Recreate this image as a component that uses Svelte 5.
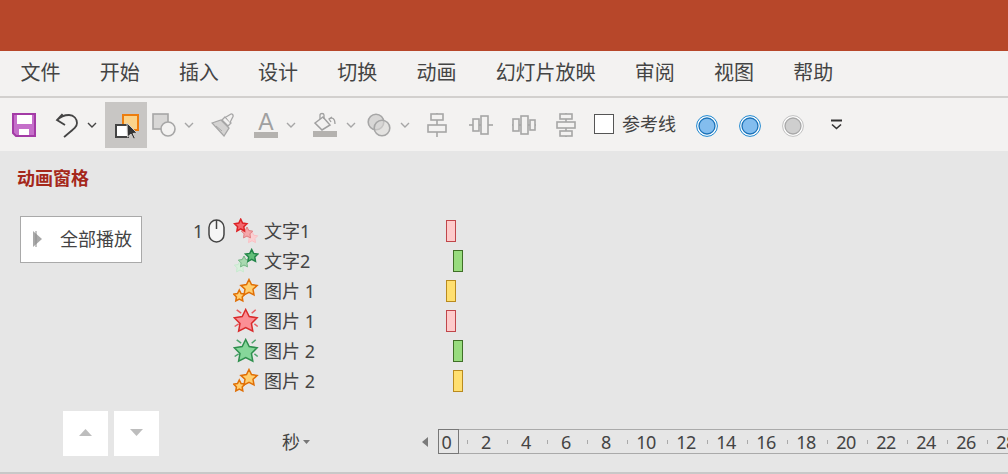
<script>
    const menus = ['文件', '开始', '插入', '设计', '切换', '动画', '幻灯片放映', '审阅', '视图', '帮助'];

    const rows = [
        { num: '1', icon: 'trailRed', label: '文字1', bar: 'red', offset: 0 },
        { icon: 'trailGreen', label: '文字2', bar: 'green', offset: 7 },
        { icon: 'twinOrange', label: '图片 1', bar: 'yellow', offset: 0 },
        { icon: 'burstRed', label: '图片 1', bar: 'red', offset: 0 },
        { icon: 'burstGreen', label: '图片 2', bar: 'green', offset: 7 },
        { icon: 'twinOrange', label: '图片 2', bar: 'yellow', offset: 7 }
    ];

    // ruler labels: one number every 2 seconds, a tick between
    const ticks = [];
    for (let n = 0; n <= 28; n += 2) ticks.push(n);

    function star(cx, cy, r) {
        const pts = [];
        for (let i = 0; i < 10; i++) {
            const rad = i % 2 ? r * 0.5 : r;
            const a = (Math.PI / 5) * i - Math.PI / 2;
            pts.push((cx + rad * Math.cos(a)).toFixed(1) + ',' + (cy + rad * Math.sin(a)).toFixed(1));
        }
        return pts.join(' ');
    }

    const rays = [[-9, -11.7, -4.5, -8.3], [10, -11.7, 6, -8.3], [-11, 5, -7, 2.3], [12, 5, 8.7, 2.3]];
</script>

{#snippet chevron(cls)}
    <svg class="chev {cls}" width="10" height="6" viewBox="0 0 10 6"><path d="M1 1l4 4 4-4" fill="none" stroke="currentColor" stroke-width="1.4" /></svg>
{/snippet}

{#snippet radio(cls, ring, fill, edge)}
    <svg class={cls} width="22" height="22" viewBox="0 0 22 22">
        <circle cx="11" cy="11" r="10.4" fill="#fff" stroke={ring} />
        <circle cx="11" cy="11" r="8" fill={fill} stroke={edge} stroke-width="1.3" />
    </svg>
{/snippet}

{#snippet rowIcon(kind)}
    <svg class="anim-icon" width="26" height="26" viewBox="0 0 26 26">
        {#if kind === 'trailRed'}
            <polygon points={star(19, 19.7, 6)} fill="#fbd0d2" stroke="#fbc0c4" />
            <polygon points={star(14, 15, 6)} fill="#f5a8ab" stroke="#e07f82" />
            <polygon points={star(7.7, 7.7, 6.5)} fill="#f4666b" stroke="#dc2226" stroke-width="1.5" />
        {:else if kind === 'trailGreen'}
            <polygon points={star(7, 19, 6)} fill="#d9f0dc" stroke="#c8ead0" />
            <polygon points={star(11, 14, 6)} fill="#a9d8b0" stroke="#74b684" />
            <polygon points={star(18.7, 8, 6.5)} fill="#62bf79" stroke="#24864a" stroke-width="1.5" />
        {:else if kind === 'twinOrange'}
            <polygon points={star(6.3, 18, 6)} fill="#ffcf70" stroke="#e06f06" stroke-width="1.5" />
            <polygon points={star(16, 10, 8.5)} fill="#ffcf70" stroke="#e06f06" stroke-width="1.5" />
        {:else}
            {@const red = kind === 'burstRed'}
            <g stroke={red ? '#e85a5e' : '#4ca36b'} stroke-width="1.5" transform="translate(12.7 13.5)">
                {#each rays as r}
                    <line x1={r[0]} y1={r[1]} x2={r[2]} y2={r[3]} />
                {/each}
            </g>
            <polygon points={star(12.7, 13.5, 12)} fill={red ? '#fb8f95' : '#86d79a'} stroke={red ? '#d92b2b' : '#2f8f4e'} stroke-width="1.5" />
        {/if}
    </svg>
{/snippet}

<div class="app">
    <div class="titlebar"></div>

    <nav class="menubar">
        {#each menus as m}
            <span>{m}</span>
        {/each}
    </nav>

    <div class="toolbar">
        <svg class="save" width="24" height="24" viewBox="0 0 24 24">
            <path d="M1 1h22v22H4l-3-3z" fill="#c56fca" stroke="#a33ba6" stroke-width="2" />
            <rect x="5" y="2" width="15" height="9" fill="#fff" />
            <rect x="7" y="16" width="10" height="6" fill="#fff" />
        </svg>
        <svg class="undo" width="24" height="26" viewBox="0 0 24 26">
            <path d="M7.500 2L2 8l8 5M2 8C6 4 10 3 14 3c5 0 8 4 8 8 0 4-3 6-13 14" fill="none" stroke="#444" stroke-width="1.800" />
        </svg>
        <span class="dark-chev">{@render chevron('c-undo')}</span>

        <div class="select-tool">
            <svg width="25" height="26" viewBox="0 0 25 26">
                <rect x="9" y="2" width="15" height="15" fill="#fbd38a" stroke="#ed7d0e" stroke-width="2" />
                <rect x="2" y="12" width="12" height="12" fill="#fff" stroke="#444" stroke-width="2" />
                <path d="M13 10l10 10-4 .5 2.500 5-2 .5-2.500-5-3.500 3z" fill="#333" stroke="#d0cecc" stroke-width="1" />
            </svg>
        </div>

        <svg class="shape" width="24" height="24" viewBox="0 0 24 24">
            <rect x="1" y="1" width="15" height="15" fill="#d8d7d6" stroke="#a6a6a6" stroke-width="1.600" />
            <circle cx="16" cy="16" r="7" fill="#f3f2f1" stroke="#a6a6a6" stroke-width="1.600" />
        </svg>
        {@render chevron('c-shape')}

        <svg class="brush" width="24" height="24" viewBox="0 0 24 24">
            <path d="M1 10l9-3 8 8-5 8z" fill="#d4d3d2" stroke="#a6a6a6" stroke-width="1.300" />
            <path d="M11 7l3-3 6 6-3 3z" fill="#f3f2f1" stroke="#a6a6a6" stroke-width="1.300" />
            <path d="M15 4l5-3c1-.5 2.500 1 2 2.500l-3 6" fill="#f3f2f1" stroke="#a6a6a6" stroke-width="1.300" />
            <path d="M5 13l6 5" stroke="#a6a6a6" />
        </svg>

        <div class="a-tool">
            <span>A</span>
            <i></i>
        </div>
        {@render chevron('c-a')}

        <svg class="fill" width="24" height="26" viewBox="0 0 24 26">
            <path d="M2 11l8-6 7 8-8 5z" fill="#f3f2f1" stroke="#a0a0a0" stroke-width="1.500" />
            <path d="M7 7V3c0-2 4-2 4 0v4" fill="none" stroke="#a0a0a0" stroke-width="1.300" />
            <path d="M16 7c3-2 6-1 6 5M19 5l-3 2 2 3" fill="none" stroke="#a0a0a0" stroke-width="1.300" />
            <rect x="0" y="19" width="24" height="6" fill="#b4b2af" />
        </svg>
        {@render chevron('c-fill')}

        <svg class="merge" width="24" height="24" viewBox="0 0 24 24">
            <circle cx="9" cy="9" r="7.800" fill="#d8d7d6" stroke="#a6a6a6" stroke-width="1.600" />
            <circle cx="15" cy="15" r="7.800" fill="#d8d7d6" fill-opacity=".6" stroke="#a6a6a6" stroke-width="1.600" />
        </svg>
        {@render chevron('c-merge')}

        <svg class="al1" width="20" height="24" viewBox="0 0 20 24">
            <g fill="none" stroke="#a6a6a6" stroke-width="1.600">
                <path d="M10 0v24" />
                <rect x="4" y="1" width="12" height="6" fill="#f3f2f1" />
                <rect x="1" y="12" width="18" height="7" fill="#f3f2f1" />
            </g>
        </svg>
        <svg class="al2" width="24" height="20" viewBox="0 0 24 20">
            <g fill="none" stroke="#a6a6a6" stroke-width="1.600">
                <path d="M0 10h24" />
                <rect x="4" y="4" width="6" height="12" fill="#f3f2f1" />
                <rect x="12" y="1" width="7" height="18" fill="#f3f2f1" />
            </g>
        </svg>
        <svg class="al3" width="24" height="20" viewBox="0 0 24 20">
            <g fill="none" stroke="#a6a6a6" stroke-width="1.600">
                <path d="M0 10h24" />
                <rect x="1" y="4" width="6" height="12" fill="#f3f2f1" />
                <rect x="9" y="1" width="7" height="18" fill="#f3f2f1" />
                <rect x="18" y="5" width="5" height="10" fill="#f3f2f1" />
            </g>
        </svg>
        <svg class="al4" width="20" height="24" viewBox="0 0 20 24">
            <g fill="none" stroke="#a6a6a6" stroke-width="1.600">
                <path d="M10 0v24" />
                <rect x="4" y="1" width="12" height="5" fill="#f3f2f1" />
                <rect x="1" y="9" width="18" height="6" fill="#f3f2f1" />
                <rect x="4" y="18" width="12" height="5" fill="#f3f2f1" />
            </g>
        </svg>

        <label class="guide">
            <span class="box"></span>
            <span>参考线</span>
        </label>

        {@render radio('r1', '#1a86d0', '#83bdee', '#1a72b8')}
        {@render radio('r2', '#1a86d0', '#83bdee', '#1a72b8')}
        {@render radio('r3', '#c0c0c0', '#cfcfcf', '#a8a8a8')}

        <svg class="more" width="13" height="12" viewBox="0 0 13 12">
            <path d="M1 1.500h11" stroke="#333" stroke-width="2" />
            <path d="M2 5.500l4.500 4 4.500-4" fill="none" stroke="#333" stroke-width="1.600" />
        </svg>
    </div>

    <section class="pane">
        <h2>动画窗格</h2>

        <div class="pane-body">
            <div class="play-col">
                <button class="play">
                    <svg width="10" height="16" viewBox="0 0 10 16"><path d="M0 0l9 8-9 8z" fill="#a8a8a8" /><path d="M3 0v16" stroke="#8c8c8c" /></svg>
                    <span>全部播放</span>
                </button>
            </div>

            <div class="list">
                {#each rows as row}
                    <div class="row">
                        <span class="num">{row.num ?? ''}</span>
                        <span class="mouse-cell">
                            {#if row.num}
                                <svg width="17" height="24" viewBox="0 0 17 24">
                                    <rect x="1" y="1" width="15" height="22" rx="7.500" fill="#f5f5f5" stroke="#444" stroke-width="1.500" />
                                    <path d="M8.500 1v9" stroke="#444" stroke-width="1.500" />
                                </svg>
                            {/if}
                        </span>
                        {@render rowIcon(row.icon)}
                        <span class="label">{row.label}</span>
                        <span class="track">
                            <i class="bar {row.bar}" style="margin-left: {row.offset}px"></i>
                        </span>
                    </div>
                {/each}
            </div>
        </div>

        <div class="footer">
            <div class="arrows">
                <button aria-label="上移"><svg width="13" height="7" viewBox="0 0 13 7"><path d="M6.500 0L13 7H0z" fill="#bdbdbd" /></svg></button>
                <button aria-label="下移"><svg width="13" height="7" viewBox="0 0 13 7"><path d="M6.500 7L0 0h13z" fill="#bdbdbd" /></svg></button>
            </div>

            <div class="unit">
                <span>秒</span>
                <svg width="7" height="4" viewBox="0 0 7 4"><path d="M0 0h7L3.500 4z" fill="#777" /></svg>
            </div>

            <svg class="ruler-left" width="6" height="10" viewBox="0 0 6 10"><path d="M6 0v10L0 5z" fill="#7a7a7a" /></svg>

            <div class="ruler">
                {#each ticks as n, i}
                    <span class="num-cell" class:current={i === 0}>{n}</span>
                    <span class="tick"><i></i></span>
                {/each}
            </div>
        </div>
    </section>
</div>

<style>
    :global(body) {
        margin: 0;
        overflow: hidden;
        font-family: "Noto Sans", "Noto Sans CJK SC", sans-serif;
        color: #444;
    }
    .app {
        width: 1008px;
        height: 474px;
        display: flex;
        flex-direction: column;
        overflow: hidden;
        background: #e6e6e6;
    }
    .titlebar {
        height: 51px;
        flex: none;
        background: #b7472a;
    }
    .menubar {
        height: 45px;
        flex: none;
        box-sizing: border-box;
        display: flex;
        align-items: center;
        gap: 39.200px;
        padding: 0 0 1px 20.500px;
        background: #f3f2f1;
        font-size: 20px;
        line-height: 1;
    }
    .toolbar {
        height: 55px;
        flex: none;
        box-sizing: border-box;
        display: flex;
        align-items: center;
        border-top: 2px solid #d2d0ce;
        background: #f3f2f1;
        color: #a6a6a6;
    }
    .toolbar > svg {
        flex: none;
    }
    .save { margin-left: 12px; }
    .undo { margin-left: 19px; }
    .dark-chev { display: flex; color: #444; }
    .chev { flex: none; margin-top: 1px; }
    .c-undo { margin-left: 8px; }
    .select-tool {
        flex: none;
        width: 42px;
        height: 46px;
        margin-left: 8px;
        background: #c8c6c4;
        display: flex;
        align-items: center;
        justify-content: center;
    }
    .select-tool svg { margin-top: 2px; margin-left: 1px; }
    .shape { margin-left: 5px; }
    .c-shape { margin-left: 8px; }
    .brush { margin-left: 17px; }
    .a-tool {
        flex: none;
        width: 24px;
        margin-left: 19px;
        display: flex;
        flex-direction: column;
        align-items: center;
        font-family: "Liberation Sans", sans-serif;
        font-size: 23px;
        line-height: 20px;
        color: #a0a0a0;
    }
    .a-tool i {
        display: block;
        width: 24px;
        height: 6px;
        margin-top: 0;
        background: #b4b2af;
    }
    .c-a { margin-left: 8px; }
    .fill { margin-left: 17px; }
    .c-fill { margin-left: 9px; }
    .merge { margin-left: 11px; }
    .c-merge { margin-left: 9px; }
    .al1 { margin-left: 17px; }
    .al2 { margin-left: 22px; }
    .al3 { margin-left: 19px; }
    .al4 { margin-left: 20px; }
    .guide {
        flex: none;
        margin-left: 18px;
        margin-top: -2px;
        display: flex;
        align-items: center;
        gap: 8px;
        font-size: 18px;
        line-height: 1;
        color: #444;
    }
    .box {
        width: 18px;
        height: 18px;
        border: 1px solid #555;
        background: #fff;
    }
    .r1 { margin-left: 20px; margin-top: 2px; }
    .r2 { margin-left: 21px; margin-top: 2px; }
    .r3 { margin-left: 21px; margin-top: 2px; }
    .more { margin-left: 26px; }

    .pane {
        flex: 1;
        min-height: 0;
        box-sizing: border-box;
        border-bottom: 2px solid #c8c8c8;
        display: flex;
        flex-direction: column;
    }
    h2 {
        margin: 0;
        height: 65px;
        box-sizing: border-box;
        padding: 17px 0 0 17px;
        font-size: 18px;
        line-height: 20px;
        font-weight: 700;
        color: #a5281b;
    }
    .pane-body {
        display: flex;
        height: 180px;
        flex: none;
    }
    .play-col {
        width: 193px;
        flex: none;
        padding-left: 20px;
        box-sizing: border-box;
    }
    .play {
        width: 122px;
        height: 47px;
        box-sizing: border-box;
        padding: 0 0 2px 12px;
        display: flex;
        align-items: center;
        border: 1px solid #a9a9a9;
        background: #fff;
        font: inherit;
        font-size: 18px;
        line-height: 1;
        color: #444;
    }
    .play span { margin-left: 17px; }
    .row {
        height: 30px;
        display: flex;
        align-items: center;
        font-size: 18px;
        line-height: 1;
    }
    .num { width: 15px; flex: none; }
    .mouse-cell {
        width: 25px;
        flex: none;
        display: flex;
    }
    .anim-icon { flex: none; }
    .label {
        width: 182px;
        flex: none;
        margin-left: 5px;
    }
    .track { display: flex; }
    .bar {
        display: block;
        width: 10px;
        height: 22px;
        box-sizing: border-box;
        border: 1px solid;
    }
    .red { background: #fecbcb; border-color: #c0464a; }
    .green { background: #98dc7e; border-color: #3f6f26; }
    .yellow { background: #ffdf70; border-color: #b98a1e; }

    .footer {
        flex: 1;
        display: flex;
        padding-top: 15px;
    }
    .arrows {
        flex: none;
        width: 219px;
        padding-left: 63px;
        box-sizing: border-box;
        display: flex;
        gap: 6px;
    }
    .arrows button {
        width: 45px;
        height: 45px;
        padding: 0 0 2px;
        border: none;
        background: #fff;
        display: flex;
        align-items: center;
        justify-content: center;
    }
    .unit {
        flex: none;
        width: 201px;
        height: 45px;
        padding: 20px 0 0 63px;
        box-sizing: border-box;
        display: flex;
        align-items: flex-start;
        gap: 3px;
        font-size: 18px;
        line-height: 22px;
    }
    .unit svg { margin-top: 9px; }
    .ruler-left {
        flex: none;
        margin: 26px 0 0 2px;
    }
    .ruler {
        flex: none;
        height: 25px;
        margin: 18px 0 0 10px;
        box-sizing: border-box;
        border-top: 1px solid #aaa;
        border-bottom: 1px solid #aaa;
        display: flex;
        font-family: "Noto Sans", sans-serif;
        font-size: 18px;
        letter-spacing: -0.5px;
        line-height: 24px;
    }
    .num-cell {
        width: 21px;
        flex: none;
        padding-right: 5px;
        box-sizing: border-box;
        display: flex;
        justify-content: center;
    }
    .current {
        height: 25px;
        margin-top: -1px;
        border: 1px solid #777;
        padding-right: 4px;
    }
    .tick {
        width: 19px;
        flex: none;
        padding-left: 8px;
        box-sizing: border-box;
        display: flex;
        align-items: center;
    }
    .tick i {
        display: block;
        width: 1px;
        height: 4px;
        background: #aaa;
    }
</style>
